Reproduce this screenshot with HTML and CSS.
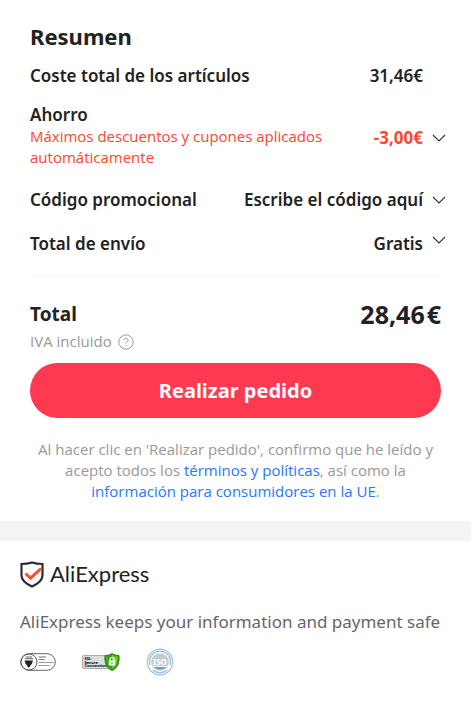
FILE: index.html
```
<!DOCTYPE html>
<html lang="es">
<head>
    <meta charset="UTF-8">
    <meta name="viewport" content="width=device-width, initial-scale=1.0">
    <title>Resumen</title>
    <link rel="stylesheet" href="styles.css">
</head>
<body>
    <main class="summary">
        <h1 class="title">Resumen</h1>
        <div class="row">
            <span class="label">Coste total de los artículos</span>
            <span class="value">31,46€</span>
        </div>
        <div class="row savings">
            <div class="label">
                Ahorro
                <p class="note">Máximos descuentos y cupones aplicados automáticamente</p>
            </div>
            <button class="value toggle discount" type="button">-3,00€
                <svg class="chevron" viewBox="0 0 14 8"><path d="M1 1l6 6 6-6"/></svg>
            </button>
        </div>
        <div class="row promo">
            <span class="label">Código promocional</span>
            <button class="value toggle" type="button">Escribe el código aquí
                <svg class="chevron" viewBox="0 0 14 8"><path d="M1 1l6 6 6-6"/></svg>
            </button>
        </div>
        <div class="row shipping">
            <span class="label">Total de envío</span>
            <button class="value toggle toggle-top" type="button">Gratis
                <svg class="chevron" viewBox="0 0 14 8"><path d="M1 1l6 6 6-6"/></svg>
            </button>
        </div>
        <div class="total">
            <span class="total-label">Total</span>
            <span class="total-price">28,46<span class="currency">€</span></span>
        </div>
        <div class="tax">
            IVA incluido
            <svg class="help" viewBox="0 0 16 16">
                <circle cx="8" cy="8" r="7.2"/>
                <path d="M5.9 6.4c0-1.3.9-2.1 2.1-2.1s2.1.8 2.1 1.9c0 1.5-2.1 1.6-2.1 3.2M8 10.8v1.1"/>
            </svg>
        </div>
        <button class="order" type="button">Realizar pedido</button>
        <p class="terms">Al hacer clic en 'Realizar pedido', confirmo que he leído y acepto todos los <a href="#">términos y políticas</a>, así como la <a href="#">información para consumidores en la UE</a>.</p>
    </main>
    <footer class="safety">
        <div class="brand">
            <svg class="shield" viewBox="0 0 24 27">
                <path class="shield-outline" d="M12 1.5C8.500 2.700 5 3 1.500 3v11.500c0 5.500 5 8.500 10.500 11 5.500-2.500 10.500-5.500 10.500-11V3C19 3 15.500 2.700 12 1.500z"/>
                <path class="shield-check" d="M5.500 12.500l5 4.700L21 7.500"/>
            </svg>
            <span class="wordmark">AliExpress</span>
        </div>
        <p class="safe-text">AliExpress keeps your information and payment safe</p>
        <div class="badges">
            <svg class="badge-cert" viewBox="0 0 36 18">
                <rect x="0.700" y="0.700" width="34.600" height="16.600" rx="8.300" fill="#fff" stroke="#666"/>
                <circle cx="9" cy="9" r="8" fill="#fff" stroke="#555"/>
                <path d="M4.500 7.500h8.500l-1 3-3.200 4.500-3.300-4.500z" fill="#222"/>
                <path d="M6 4h6M5 5.700h8" stroke="#666"/>
                <path d="M18.500 4h7.500M18.500 6.600h6" stroke="#777"/>
                <path d="M18.500 9.500h15M18.500 12.500h11" stroke="#999"/>
            </svg>
            <svg class="badge-ssl" viewBox="0 0 38 18">
                <rect x="0.500" y="2.500" width="28" height="13" rx="1.500" fill="#ddd" stroke="#aaa"/>
                <g class="ssl-text">
                    <text x="2.500" y="7">SSL</text>
                    <text x="2.500" y="10.500">Secure</text>
                    <text x="2.500" y="14">Connection</text>
                </g>
                <path d="M30 .5c2 1.500 4.500 2 7 2 .5 6-.5 12-7 15-6.500-3-7.500-9-7-15 2.500 0 5-.5 7-2z" fill="#3ba712" stroke="#258008"/>
                <path d="M30 2c2 1 3.500 1.500 5.500 1.500 0 5-.5 9-5.500 12z" fill="#71cc3c"/>
                <path d="M28 8V6.500a2 2 0 0 1 4 0V8" fill="none" stroke="#fff" stroke-width="1.200"/>
                <rect x="26.800" y="7.500" width="6.400" height="5" rx=".5" fill="#f5ffee"/>
                <path d="M30 9v2" stroke="#3ba712"/>
            </svg>
            <svg class="badge-iso" viewBox="0 0 28 28">
                <circle cx="14" cy="14" r="12.800" fill="#fff" stroke="#a9c4da" stroke-width="1.300"/>
                <path d="M4 17a10.500 10.500 0 1 1 20 0M7 22a10.500 10.500 0 0 0 14 0" fill="none" stroke="#a3c1d8" stroke-width="1.500"/>
                <circle cx="14" cy="14" r="8.800" fill="#c3ccd2"/>
                <path d="M7 18h14a8.800 8.800 0 0 1-14 0z" fill="#6f9fc5"/>
                <path d="M7 18.500h14" stroke="#fff"/>
                <text class="iso-text" x="14" y="16.500">ISO</text>
            </svg>
        </div>
    </footer>
</body>
</html>
```
FILE: styles.css
```
body {
    margin: 0;
    padding-right: 4px;
    font-family: "Noto Sans", "Open Sans", sans-serif;
    background-color: #fff;
    color: #222;
}

h1, p {
    margin: 0;
}

button {
    font-family: inherit;
    border: none;
    cursor: pointer;
}

.summary {
    padding: 22px 30px 19px;
}

.title {
    font-size: 22px;
    line-height: 28px;
    font-weight: 700;
}

.row {
    display: flex;
    justify-content: space-between;
    align-items: center;
    margin-top: 14px;
    font-size: 17px;
    line-height: 24px;
    font-weight: 600;
}

.value {
    padding: 0;
    margin-right: 18px;
    white-space: nowrap;
}

.toggle {
    display: flex;
    align-items: center;
    gap: 9px;
    margin-right: -5px;
    background: none;
    color: inherit;
    font-size: inherit;
    line-height: inherit;
    font-weight: inherit;
}

.toggle-top {
    align-items: flex-start;
}

.toggle-top .chevron {
    margin-top: 4px;
}

.chevron {
    width: 14px;
    height: 8px;
    fill: none;
    stroke: #333;
    stroke-width: 1.1;
}

.savings {
    margin-top: 16px;
    line-height: 22px;
}

.savings .label {
    flex: 1;
}

.note,
.tax,
.terms {
    font-family: "Open Sans", sans-serif;
    font-size: 15px;
    line-height: 21px;
}

.note {
    max-width: 310px;
    color: #ff472e;
    font-weight: 400;
}

.discount {
    padding-top: 4px;
    color: #ff472e;
    font-weight: 700;
}

.promo,
.shipping {
    margin-top: 20px;
}

.total {
    display: flex;
    justify-content: space-between;
    align-items: center;
    margin-top: 20px;
    padding-top: 20px;
    border-top: 1px solid #f7f7f7;
    line-height: 34px;
    font-weight: 700;
}

.total-label {
    font-size: 19px;
}

.total-price {
    font-size: 25px;
}

.currency {
    margin-left: 2px;
}

.tax {
    display: flex;
    align-items: center;
    gap: 6px;
    color: #999;
}

.help {
    width: 16px;
    height: 16px;
    fill: none;
    stroke: #999;
}

.order {
    display: block;
    width: 100%;
    margin-top: 11px;
    padding: 14px;
    border-radius: 28px;
    background-color: #ff3950;
    color: #fff;
    font-size: 20px;
    line-height: 27px;
    font-weight: 700;
}

.terms {
    margin-top: 21px;
    color: #999;
    text-align: center;
}

.terms a {
    color: #2678ff;
    text-decoration: none;
}

.safety {
    padding: 19px 20px;
    border-top: 20px solid #f4f4f4;
}

.brand {
    display: flex;
    align-items: center;
    gap: 6px;
}

.shield {
    width: 24px;
    height: 27px;
    fill: none;
}

.shield-outline {
    stroke: #2d2d2d;
    stroke-width: 2.2;
}

.shield-check {
    stroke: #ff4b32;
    stroke-width: 3;
}

.wordmark {
    font-family: Lato, sans-serif;
    font-size: 22px;
    line-height: 28px;
}

.safe-text {
    margin-top: 22px;
    color: #666;
    font-size: 17px;
    line-height: 24px;
}

.badges {
    display: flex;
    align-items: center;
    gap: 26px;
    margin-top: 14px;
}

.badge-cert {
    width: 36px;
    height: 18px;
}

.badge-ssl {
    width: 38px;
    height: 18px;
}

.badge-iso {
    width: 28px;
    height: 28px;
}

.ssl-text {
    font-size: 4px;
    font-weight: 700;
}

.iso-text {
    font-size: 8px;
    font-weight: 700;
    fill: #fff;
    text-anchor: middle;
}
```
